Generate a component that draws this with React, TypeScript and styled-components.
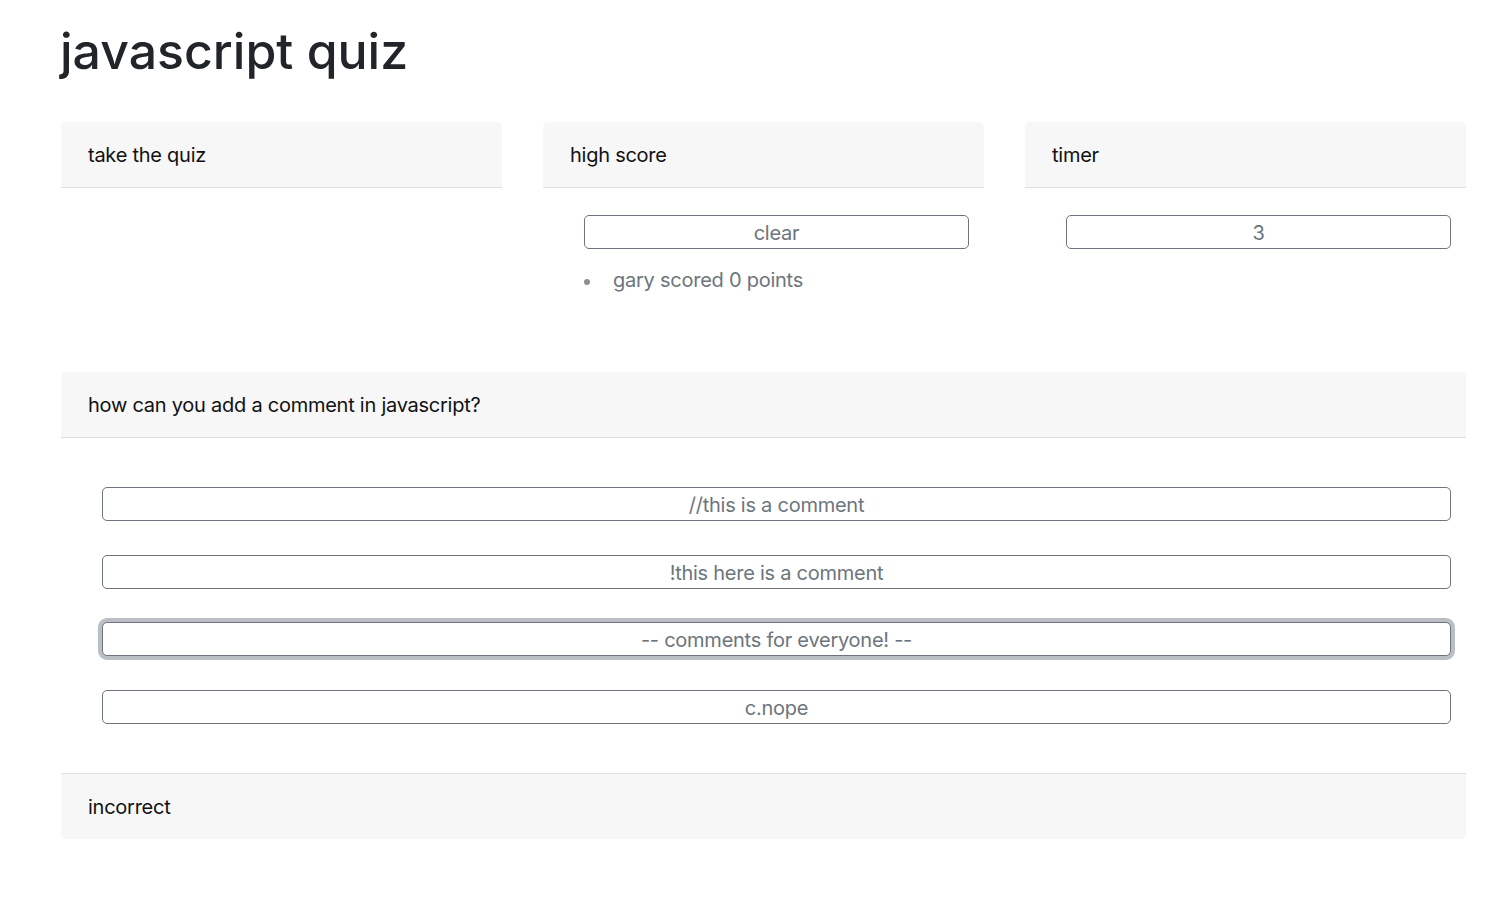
import React from "react";
import styled, { createGlobalStyle } from "styled-components";

const Global = createGlobalStyle`
  html, body { margin: 0; padding: 0; background: #fff; }
  body {
    font-family: Inter, "Noto Sans", "Liberation Sans", sans-serif;
    color: #212529;
    font-size: 20px;
    line-height: 30px;
  }
  * { box-sizing: border-box; }
`;

const Page = styled.div`
  padding: 0 36px 40px 61px;
`;

const Title = styled.h1`
  margin: 21px 0 41px -1px;
  font-size: 50px;
  line-height: 60px;
  font-weight: 500;
  color: #212529;
  letter-spacing: 0;
`;

const TopRow = styled.div`
  display: grid;
  grid-template-columns: 441px 441px 1fr;
  gap: 41px;
  align-items: start;
  margin-bottom: 49px;
`;

const Card = styled.section`
  background: #fff;
  border-radius: 5px;
  display: flex;
  flex-direction: column;
`;

const CardHeader = styled.div`
  background: #f7f7f7;
  border-bottom: 1px solid #dfdfdf;
  border-radius: 5px 5px 0 0;
  padding: 18px 26px 17px 27px;
  font-size: 20px;
  line-height: 30px;
  letter-spacing: -0.25px;
  color: #111;
`;

const CardFooter = styled.div`
  background: #f7f7f7;
  border-top: 1px solid #dfdfdf;
  border-radius: 0 0 5px 5px;
  padding: 18px 26px 17px 27px;
  font-size: 20px;
  line-height: 30px;
  letter-spacing: -0.25px;
  color: #111;
`;

const CardBody = styled.div<{ $top: number; $bottom: number }>`
  padding: ${(p) => p.$top}px 15px ${(p) => p.$bottom}px 41px;
  display: flex;
  flex-direction: column;
`;

const OutlineButton = styled.button<{ $focused?: boolean }>`
  display: block;
  width: 100%;
  height: 34px;
  padding: 2px 12px 0;
  margin: 0;
  background: #fff;
  border: 1px solid #6c757d;
  border-radius: 5px;
  color: #6c757d;
  font-family: Inter, "Noto Sans", "Liberation Sans", sans-serif;
  font-size: 20px;
  line-height: 30px;
  letter-spacing: -0.25px;
  text-align: center;
  cursor: pointer;
  box-shadow: ${(p) => (p.$focused ? "0 0 0 4px rgba(130, 138, 145, 0.55)" : "none")};
  outline: none;
`;

const AnswerList = styled.div`
  display: flex;
  flex-direction: column;
  gap: 33.6px;
`;

const ScoreList = styled.ul`
  list-style: none;
  margin: 16px 0 0 0;
  padding: 0;
`;

const ScoreItem = styled.li`
  display: flex;
  align-items: center;
  color: #6c757d;
  font-size: 20px;
  line-height: 30px;
  letter-spacing: -0.25px;
`;

const Bullet = styled.span`
  width: 6px;
  height: 6px;
  border-radius: 50%;
  background: #8a8f94;
  margin-right: 23px;
  margin-top: 3px;
  flex: none;
`;

const answers = [
  "//this is a comment",
  "!this here is a comment",
  "-- comments for everyone! --",
  "c.nope",
];

export default function App() {
  return (
    <>
      <Global />
      <Page>
        <Title>javascript quiz</Title>
        <TopRow>
          <Card>
            <CardHeader>take the quiz</CardHeader>
          </Card>
          <Card>
            <CardHeader>high score</CardHeader>
            <CardBody $top={27} $bottom={28}>
              <OutlineButton>clear</OutlineButton>
              <ScoreList>
                <ScoreItem>
                  <Bullet />
                  gary scored 0 points
                </ScoreItem>
              </ScoreList>
            </CardBody>
          </Card>
          <Card>
            <CardHeader>timer</CardHeader>
            <CardBody $top={27} $bottom={28}>
              <OutlineButton>3</OutlineButton>
            </CardBody>
          </Card>
        </TopRow>
        <Card>
          <CardHeader>how can you add a comment in javascript?</CardHeader>
          <CardBody $top={49} $bottom={49}>
            <AnswerList>
              {answers.map((a, i) => (
                <OutlineButton key={a} $focused={i === 2}>
                  {a}
                </OutlineButton>
              ))}
            </AnswerList>
          </CardBody>
          <CardFooter>incorrect</CardFooter>
        </Card>
      </Page>
    </>
  );
}
